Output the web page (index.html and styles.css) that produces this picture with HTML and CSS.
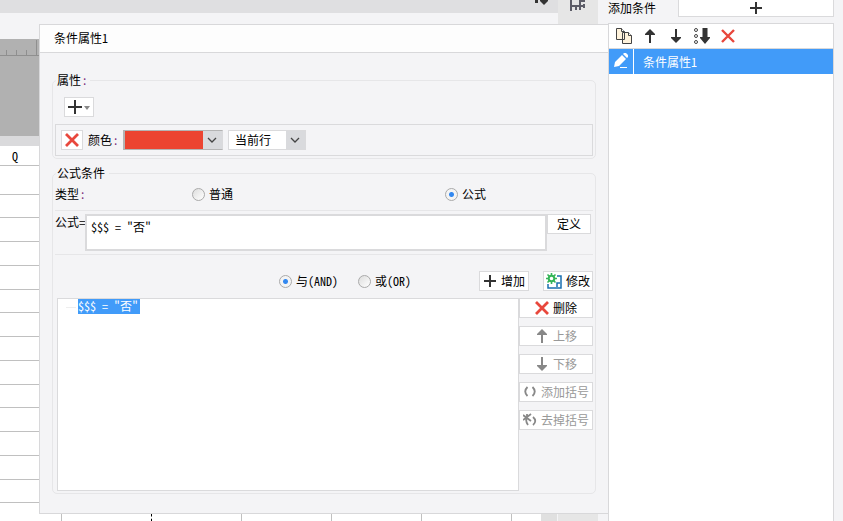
FILE: index.html
```html
<!DOCTYPE html>
<html lang="zh-CN">

<head>
    <meta charset="UTF-8">
    <meta name="viewport" content="width=device-width, initial-scale=1.0">
    <title>条件属性</title>
    <link rel="stylesheet" href="styles.css">
</head>

<body>
    <div class="workspace">
        <div class="main">
            <div class="topbar">
                <svg width="16" height="5" viewBox="0 0 16 5"><path d="M1 0h3v3H1zM6 0h8v1l-4 4-4-4z" fill="#333"/></svg>
            </div>
            <div class="tabs"></div>
            <div class="ruler">
                <svg width="40" height="17" viewBox="0 0 40 17"><path d="M6.500 11v5M16.500 11v5M26.500 11v5M36.500 1v15M0 16.500h40" stroke="#8f8f8f" fill="none"/></svg>
            </div>
            <div class="canvas"></div>
            <div class="band"></div>
            <div class="sheet_wrap">
                <table class="sheet">
                    <colgroup>
                        <col class="col_q"><col><col><col><col><col><col class="col_last">
                    </colgroup>
                    <tr class="sheet_head"><th>Q</th><th></th><th></th><th></th><th></th><th></th><th></th></tr>
                    <tr class="tall"><td></td><td></td><td></td><td></td><td></td><td></td><td></td></tr>
                    <tr><td></td><td></td><td></td><td></td><td></td><td></td><td></td></tr>
                    <tr><td></td><td></td><td></td><td></td><td></td><td></td><td></td></tr>
                    <tr><td></td><td></td><td></td><td></td><td></td><td></td><td></td></tr>
                    <tr><td></td><td></td><td></td><td></td><td></td><td></td><td></td></tr>
                    <tr><td></td><td></td><td></td><td></td><td></td><td></td><td></td></tr>
                    <tr><td></td><td></td><td></td><td></td><td></td><td></td><td></td></tr>
                    <tr><td></td><td></td><td></td><td></td><td></td><td></td><td></td></tr>
                    <tr><td></td><td></td><td></td><td></td><td></td><td></td><td></td></tr>
                    <tr><td></td><td></td><td></td><td></td><td></td><td></td><td></td></tr>
                    <tr><td></td><td></td><td></td><td></td><td></td><td></td><td></td></tr>
                    <tr><td></td><td></td><td></td><td></td><td></td><td></td><td></td></tr>
                    <tr><td></td><td></td><td></td><td></td><td></td><td></td><td></td></tr>
                    <tr><td></td><td></td><td></td><td></td><td></td><td></td><td></td></tr>
                    <tr><td></td><td class="page_break"></td><td></td><td></td><td></td><td></td><td></td></tr>
                </table>
                <div class="scrollbar"></div>
            </div>
        </div>
        <div class="strip">
            <svg width="18" height="12" viewBox="0 0 18 12"><path d="M2 0v11M2 6h14M7 6v4M11 0v10M11 1h5M15 4v4" stroke="#5d5d68" stroke-width="2" fill="none"/></svg>
        </div>

        <!-- 条件属性窗口 -->
        <div class="dialog">
            <div class="dialog_title">条件属性<span class="en">1</span></div>
            <div class="dialog_body">
                <fieldset class="group attr">
                    <legend>属性<span class="colon">:</span></legend>
                    <button class="btn add_attr" aria-label="添加属性">
                        <svg width="26" height="16" viewBox="0 0 26 16"><path d="M2 8h14M9 1v14" stroke="#333" stroke-width="2"/><path d="M18 7h6l-3 4z" fill="#888"/></svg>
                    </button>
                    <div class="attr_row">
                        <button class="btn del_attr" aria-label="删除属性">
                            <svg width="14" height="14" viewBox="0 0 14 14"><path d="M1 1l12 12M13 1L1 13" stroke="#e8473c" stroke-width="2.800"/></svg>
                        </button>
                        <label class="attr_name" for="color">颜色<span class="colon">:</span></label>
                        <select id="color" class="select color"><option aria-label="红色"></option></select>
                        <select class="select range" aria-label="范围"><option>当前行</option></select>
                    </div>
                </fieldset>

                <fieldset class="group formula_group">
                    <legend>公式条件</legend>
                    <div class="type_row">
                        <span>类型<span class="colon">:</span></span>
                        <label><input type="radio" name="type">普通</label>
                        <label><input type="radio" name="type" checked>公式</label>
                    </div>
                    <div class="formula_row">
                        <label for="formula">公式=</label>
                        <textarea id="formula" class="formula" spellcheck="false">$$$ = "否"</textarea>
                        <button class="btn define">定义</button>
                    </div>
                    <div class="join_row">
                        <div class="joins">
                            <label><input type="radio" name="join" checked><span>与<span class="en">(AND)</span></span></label>
                            <label><input type="radio" name="join"><span>或<span class="en">(OR)</span></span></label>
                        </div>
                        <button class="btn join_btn">
                            <svg width="14" height="14" viewBox="0 0 14 14"><path d="M1 7h12M7 1v12" stroke="#333" stroke-width="2"/></svg>增加
                        </button>
                        <button class="btn join_btn">
                            <svg width="16" height="16" viewBox="0 0 16 16"><path d="M2 11v4h13V3h-4M11 14v-4h3" stroke="#1a6fb0" stroke-width="1.500" fill="none"/><circle cx="5.500" cy="5.500" r="2.800" fill="#fff" stroke="#35b558" stroke-width="2"/><path d="M5.500 0v3M5.500 8v3M0 5.500h3M8 5.500h3M1.500 1.500l2 2M7.500 7.500l2 2M9.500 1.500l-2 2M3.500 7.500l-2 2" stroke="#35b558" stroke-width="1.600"/></svg>修改
                        </button>
                    </div>
                    <div class="list_row">
                        <div class="tree"><span class="tree_item">$$$ = "否"</span></div>
                        <div class="actions">
                            <button class="btn">
                                <svg width="14" height="14" viewBox="0 0 14 14"><path d="M1 1l12 12M13 1L1 13" stroke="#e8473c" stroke-width="2.800"/></svg>删除
                            </button>
                            <button class="btn" disabled>
                                <svg width="14" height="14" viewBox="0 0 14 14"><path d="M7 14V3" stroke="#888" stroke-width="2"/><path d="M7 0L2 5v1h10V5z" fill="#888"/></svg>上移
                            </button>
                            <button class="btn" disabled>
                                <svg width="14" height="14" viewBox="0 0 14 14"><path d="M7 0v11" stroke="#888" stroke-width="2"/><path d="M7 14L2 9V8h10v1z" fill="#888"/></svg>下移
                            </button>
                            <button class="btn" disabled>
                                <svg width="14" height="14" viewBox="0 0 14 14"><path d="M4.500 2Q0 6.500 4.500 11M9.500 2q4.500 4.500 0 9" stroke="#888" stroke-width="1.800" fill="none"/></svg>添加括号
                            </button>
                            <button class="btn" disabled>
                                <svg width="14" height="14" viewBox="0 0 14 14"><path d="M0 2l8 6M8 1L0 7M4 1v3q-2 4 1 8M10 4q4.500 4 0 8" stroke="#888" stroke-width="1.800" fill="none"/></svg>去掉括号
                            </button>
                        </div>
                    </div>
                </fieldset>
            </div>
        </div>
    </div>

    <div class="panel">
        <div class="panel_top">
            <span>添加条件</span>
            <button class="btn add_cond" aria-label="添加条件">
                <svg width="12" height="12" viewBox="0 0 12 12"><path d="M0 6h12M6 0v12" stroke="#333" stroke-width="2"/></svg>
            </button>
        </div>
        <div class="cond_list">
            <div class="tools">
                <button class="tool" aria-label="复制"><svg width="18" height="16" viewBox="0 0 18 16"><path d="M1.500 .5h5l3 3v8h-8zM7.500 4.500h6l3 3v8h-9z" fill="#fff3dc" stroke="#444"/><path d="M6.500 .5v3h3M13.500 4.500v3h3" fill="#fff" stroke="#444"/></svg></button>
                <button class="tool" aria-label="上移"><svg width="18" height="16" viewBox="0 0 18 16"><path d="M9 15V4" stroke="#333" stroke-width="2"/><path d="M9 1L4 6v1h10V6z" fill="#333"/></svg></button>
                <button class="tool" aria-label="下移"><svg width="18" height="16" viewBox="0 0 18 16"><path d="M9 1v11" stroke="#333" stroke-width="2"/><path d="M9 15l-5-5V9h10v1z" fill="#333"/></svg></button>
                <button class="tool" aria-label="置底"><svg width="18" height="16" viewBox="0 0 18 16"><path d="M9.500 0h5v9H17v1l-5 6-5-6V9h2.500z" fill="#333"/><g fill="none" stroke="#444"><circle cx="3" cy="2" r="1.500"/><circle cx="3" cy="8" r="1.500"/><circle cx="3" cy="14" r="1.500"/></g></svg></button>
                <button class="tool" aria-label="删除"><svg width="18" height="16" viewBox="0 0 18 16"><path d="M3 2l12 12M15 2L3 14" stroke="#e8473c" stroke-width="2.400"/></svg></button>
            </div>
            <div class="cond">
                <div class="cond_edit">
                    <svg width="16" height="16" viewBox="0 0 16 16"><path d="M1 14l1-5 7-7 4 4-7 7zM10 1l1-1h2l2 2v2l-1 1z" fill="#fff"/><path d="M7 14.500h7" stroke="#fff"/></svg>
                </div>
                <span class="cond_name">条件属性<span class="en">1</span></span>
            </div>
        </div>
    </div>
</body>

</html>
```
FILE: styles.css
```css
* {
    box-sizing: border-box;
}

body {
    margin: 0;
    display: flex;
    height: 100vh;
    overflow: hidden;
    background: #f4f4f6;
    color: #000;
    font: 12px/16px "Noto Sans CJK SC", sans-serif;
}

button,
select,
textarea {
    margin: 0;
    font: inherit;
    color: inherit;
}

svg {
    display: block;
    flex: none;
}

.en {
    font-family: "Noto Sans Mono CJK SC", "Noto Sans CJK SC", monospace;
}

.colon {
    color: #7a2a7a;
    padding-left: 2px;
}

/* 背景表格 */
.workspace {
    position: relative;
    flex: 1;
    display: flex;
    padding-right: 10px;
}

.main {
    flex: 1;
    display: flex;
    flex-direction: column;
    min-width: 0;
}

.topbar {
    height: 13px;
    padding-right: 8px;
    display: flex;
    justify-content: flex-end;
    background: #dfdfe1;
}

.tabs {
    height: 26px;
}

.ruler {
    height: 17px;
    background: #b1b1b1;
}

.canvas {
    height: 80px;
    background: #b1b1b1;
}

.band {
    height: 10px;
    background: #dadadc;
}

.sheet_wrap {
    flex: 1;
    display: flex;
    min-height: 0;
    overflow: hidden;
    background: #fff;
}

.sheet {
    flex: 1;
    table-layout: fixed;
    border-collapse: separate;
    border-spacing: 0;
}

.sheet .col_q {
    width: 62px;
}

.sheet .col_last {
    width: 29px;
}

.sheet th,
.sheet td {
    height: 24px;
    padding: 0;
    border-right: 1px solid #c0c0c0;
    border-bottom: 1px solid #c0c0c0;
}

.sheet th {
    height: 20px;
    padding-left: 12px;
    text-align: left;
    font: 12px/18px "Noto Sans Mono CJK SC", "Noto Sans CJK SC", monospace;
}

.sheet tr:nth-child(4n+3) td {
    height: 23px;
}

.sheet .tall td {
    height: 29px;
}

.sheet tr :last-child {
    border-right: 0;
}

.sheet .page_break {
    border-right: 1px dashed #000;
}

.scrollbar {
    width: 17px;
    background: #e0e0e0;
    border-right: 1px solid #f4f4f6;
}

.strip {
    width: 40px;
    padding-left: 11px;
    background: #e6e6e6;
}

/* 窗口 */
.dialog {
    position: absolute;
    left: 39px;
    right: 0;
    top: 24px;
    background: #f4f4f6;
    border: 1px solid #d8d8da;
    border-right: 0;
}

.dialog_title {
    height: 28px;
    padding: 5px 14px;
    background: #fdfdfd;
    border-bottom: 1px solid #d8d8da;
}

.dialog_body {
    padding: 19px 12px;
}

.group {
    min-width: 0;
    margin: 0;
    padding: 0 2px 2px;
    border: 1px solid #e6e6e8;
    border-radius: 5px;
}

.group legend {
    margin-left: 1px;
    padding: 0 4px 0 1px;
}

.btn {
    display: flex;
    align-items: center;
    justify-content: center;
    gap: 4px;
    height: 20px;
    padding: 0 2px;
    background: #fff;
    border: 1px solid #dadadc;
    white-space: nowrap;
}

.btn:disabled {
    color: #999;
}

.add_attr {
    width: 30px;
    margin: 9px 0 7px 9px;
}

.attr_row {
    display: flex;
    align-items: center;
    height: 32px;
    padding: 0 5px;
    border: 1px solid #dadadc;
}

.del_attr {
    width: 22px;
}

.attr_name {
    width: 40px;
    padding-left: 5px;
}

.select {
    appearance: none;
    height: 20px;
    padding: 0 20px 0 6px;
    border: 1px solid #dadadc;
    border-radius: 0;
    outline: 0;
    background: url("data:image/svg+xml,%3Csvg xmlns='http://www.w3.org/2000/svg' width='19' height='18'%3E%3Cpath d='M0 0h19v18H0z' fill='%23d9dadd'/%3E%3Cpath d='M5 7l4 4 4-4' stroke='%23444' stroke-width='1.300' fill='none'/%3E%3C/svg%3E") right top no-repeat #fff;
}

.color {
    width: 100px;
    border-color: #b4b4b4 #dadadc #b4b4b4 #b4b4b4;
    background-color: #ec4431;
    box-shadow: inset 1px 0 #b4b4b4;
}

.range {
    width: 78px;
    margin-left: 5px;
}

.formula_group {
    margin-top: 6px;
}

.type_row {
    display: grid;
    grid-template-columns: 137px 253px 1fr;
    align-items: center;
    height: 30px;
    padding-bottom: 3px;
    border-bottom: 1px solid #e6e6e8;
}

.type_row label,
.joins label {
    display: flex;
    align-items: center;
    gap: 4px;
}

input[type="radio"] {
    appearance: none;
    width: 13px;
    height: 13px;
    margin: 0;
    border: 1px solid #aaa;
    border-radius: 50%;
    background: linear-gradient(135deg, #ddd, #fff);
}

input[type="radio"]:checked {
    background: radial-gradient(circle, #3388f0 2px, #f4f4f4 3px);
}

.formula_row {
    display: flex;
    align-items: flex-start;
    padding: 3px 2px 3px 0;
    border-bottom: 1px solid #e6e6e8;
}

.formula_row label {
    width: 30px;
    white-space: nowrap;
}

.formula {
    flex: 1;
    min-width: 0;
    height: 37px;
    padding: 3px 4px;
    border: 2px solid #dadadc;
    border-radius: 0;
    resize: none;
    outline: 0;
    overflow: hidden;
    font: 12px/16px "Noto Sans Mono CJK SC", "Noto Sans CJK SC", monospace;
}

.define {
    width: 44px;
}

.join_row {
    display: flex;
    align-items: center;
    gap: 14px;
    padding: 16px 0 7px;
}

.joins {
    flex: 1;
    display: flex;
    justify-content: flex-end;
    gap: 20px;
    padding-right: 54px;
}

.join_btn {
    width: 50px;
}

.list_row {
    display: flex;
    padding-left: 2px;
}

.tree {
    flex: 1;
    height: 193px;
    padding-left: 8px;
    display: flex;
    align-items: flex-start;
    background: #fff;
    border: 1px solid #dadadc;
}

.tree::before {
    content: "";
    width: 10px;
    height: 1px;
    margin: 8px 2px 0 0;
    background: #eee;
}

.tree_item {
    height: 15px;
    padding-right: 2px;
    line-height: 14px;
    color: #fff;
    background: #419bf9;
    font-family: "Noto Sans Mono CJK SC", "Noto Sans CJK SC", monospace;
}

.actions {
    width: 74px;
    display: flex;
    flex-direction: column;
    gap: 8px;
}

/* 右侧条件列表 */
.panel {
    width: 235px;
    padding-right: 9px;
    display: flex;
    flex-direction: column;
}

.panel_top {
    display: flex;
    align-items: flex-start;
    height: 23px;
}

.panel_top span {
    width: 70px;
}

.add_cond {
    flex: 1;
    height: 17px;
    border-top: 0;
}

.cond_list {
    flex: 1;
    background: #fff;
    border: 1px solid #d8d8da;
    border-bottom: 0;
}

.tools {
    display: flex;
    align-items: center;
    gap: 8px;
    height: 25px;
    padding-left: 6px;
    border-bottom: 1px solid #d8d8da;
}

.tool {
    padding: 0;
    border: 0;
    background: none;
}

.cond {
    display: flex;
    align-items: center;
    height: 25px;
    color: #fff;
    background: #419bf9;
}

.cond_edit {
    height: 25px;
    width: 25px;
    padding: 4px;
    border-right: 1px solid #fff;
}

.cond_name {
    padding-left: 9px;
}
```
